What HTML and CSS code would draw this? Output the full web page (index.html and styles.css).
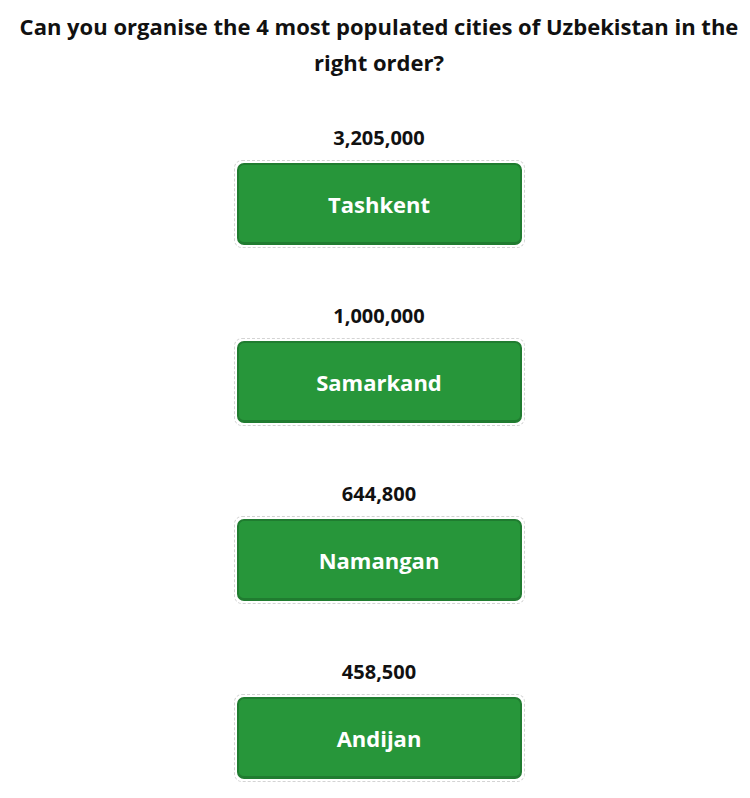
FILE: index.html
```html
<!DOCTYPE html>
<html>
<head>
<meta charset="utf-8">
<link rel="stylesheet" href="styles.css">
</head>
<body>
<main class="quiz">
  <h1 class="title">Can you organise the 4 most populated cities of Uzbekistan in the right order?</h1>
  <ol class="list">
    <li class="item">
      <div class="pop">3,205,000</div>
      <div class="slot"><div class="city">Tashkent</div></div>
    </li>
    <li class="item">
      <div class="pop">1,000,000</div>
      <div class="slot"><div class="city">Samarkand</div></div>
    </li>
    <li class="item">
      <div class="pop">644,800</div>
      <div class="slot"><div class="city">Namangan</div></div>
    </li>
    <li class="item">
      <div class="pop">458,500</div>
      <div class="slot"><div class="city">Andijan</div></div>
    </li>
  </ol>
</main>
</body>
</html>
```

FILE: styles.css
```css
html, body {
  margin: 0;
  padding: 0;
  background: #fff;
}
body {
  font-family: "Open Sans", "Noto Sans", sans-serif;
  color: #111;
}
.quiz {
  padding: 8px 0 0 8px;
  display: flex;
  flex-direction: column;
  align-items: center;
}
.title {
  margin: 0;
  font-size: 22px;
  line-height: 36px;
  font-weight: 700;
  text-align: center;
  letter-spacing: 0;
  max-width: 734px;
}
.list {
  list-style: none;
  margin: 46px 0 0;
  padding: 0;
  display: flex;
  flex-direction: column;
  gap: 56px;
  align-items: center;
}
.item {
  display: flex;
  flex-direction: column;
  align-items: center;
  gap: 10px;
}
.pop {
  font-size: 20px;
  line-height: 24px;
  font-weight: 700;
}
.slot {
  border: 1px dashed #d4d4d4;
  border-radius: 8px;
  padding: 2px;
}
.city {
  width: 281px;
  height: 77px;
  box-sizing: content-box;
  background: #27963a;
  border: 2px solid #207c30;
  border-bottom-width: 3px;
  border-radius: 7px;
  color: #fff;
  font-size: 22px;
  font-weight: 700;
  display: flex;
  align-items: center;
  justify-content: center;
}
```
